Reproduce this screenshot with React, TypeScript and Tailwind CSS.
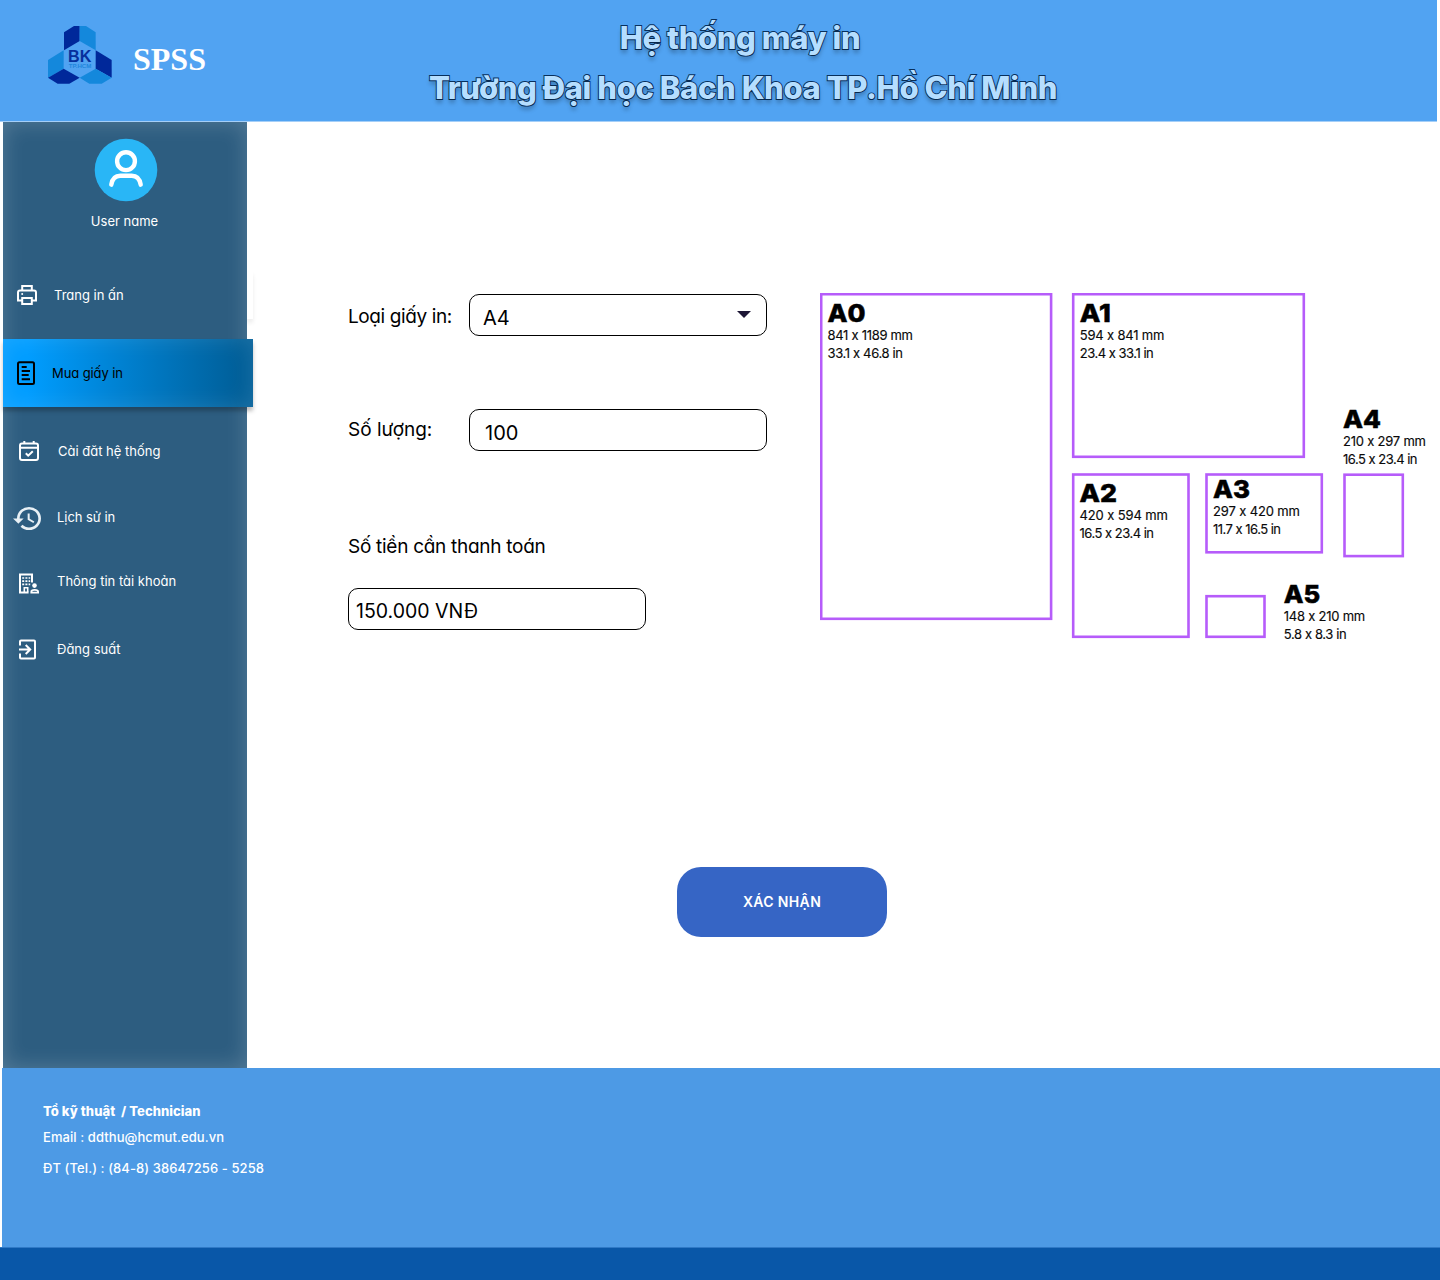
import type { ReactNode } from 'react';

const stroke = { fill: 'none', stroke: 'currentColor', strokeWidth: 2 } as const;

function Icon({ children }: { children: ReactNode }) {
  return (
    <svg className="h-7 w-7 shrink-0" viewBox="0 0 28 28">
      {children}
    </svg>
  );
}

const PrinterIcon = () => (
  <Icon>
    <g {...stroke}>
      <path d="M9.2 9.5V5h9.6v4.5" />
      <path d="M9.2 19.5H5v-8a2 2 0 0 1 2-2h14a2 2 0 0 1 2 2v8h-4.2" />
      <path d="M9.2 17h9.6v6H9.2z" />
    </g>
    <circle cx="9.2" cy="12.9" r="1" fill="currentColor" />
  </Icon>
);

const DocumentIcon = () => (
  <Icon>
    <g {...stroke}>
      <rect x="5" y="3.3" width="16" height="21.7" rx="1.5" />
      <path d="M8.7 8h5M8.7 12H17M8.7 16h7M8.7 20.2H17" />
    </g>
  </Icon>
);

const CalendarIcon = () => (
  <Icon>
    <g {...stroke}>
      <rect x="7" y="6.5" width="18" height="16.5" rx="2" />
      <path d="M7 10.7h18M11.3 4v3M20.7 4v3M12.8 16.2l2.4 2.4 4.6-4.4" />
    </g>
  </Icon>
);

const HistoryIcon = () => (
  <svg className="mt-px h-[23px] w-7 shrink-0 text-[#e8f0f5]" viewBox="1 3 21 18" preserveAspectRatio="none">
    <path
      fill="currentColor"
      d="M13 3a9 9 0 0 0-9 9H1l3.89 3.89.07.14L9 12H6c0-3.87 3.13-7 7-7s7 3.13 7 7-3.13 7-7 7c-1.93 0-3.68-.79-4.94-2.06l-1.42 1.42A8.954 8.954 0 0 0 13 21a9 9 0 0 0 0-18zm-1 5v5l4.28 2.54.72-1.21-3.5-2.08V8H12z"
    />
  </svg>
);

const AccountIcon = () => (
  <Icon>
    <g {...stroke}>
      <path d="M15.6 24.5H7v-18h12v8" />
      <path strokeWidth="1.6" d="M11.3 24v-4.2h3.4V24" />
      <path strokeDasharray="2 1.2" d="M9.2 10h8M9.2 13.2h8M9.2 16.4h8" strokeWidth="1.7" />
      <path strokeWidth="1.8" d="M18.3 24.6v-.8c0-1.3 1.1-1.9 3.4-1.9s3.4.6 3.4 1.9v.8z" />
    </g>
    <circle cx="21.5" cy="17.6" r="2.3" fill="currentColor" />
  </Icon>
);

const ExitIcon = () => (
  <Icon>
    <g {...stroke}>
      <path d="M7 9.5V5.500a1 1 0 0 1 1-1h13a1 1 0 0 1 1 1v16a1 1 0 0 1-1 1H8a1 1 0 0 1-1-1v-4" />
      <path d="M6 13.5h11M12.7 9l4.5 4.5-4.5 4.5" />
    </g>
  </Icon>
);

function Logo() {
  return (
    <svg className="h-[58px] w-16" viewBox="144 78 192 174">
      <path fill="#00289a" d="M192 97l30-19h17v45l-47 28z" />
      <path fill="#1488dc" d="M239 78h19l29 19v54l-48-28z" />
      <path fill="#1488dc" d="M144 180l47-29v55l-47 27z" />
      <path fill="#00289a" d="M144 233l47-27 48 27-31 18h-35z" />
      <path fill="#00289a" d="M287 151l48 29v53l-48-27z" />
      <path fill="#1488dc" d="M287 206l48 27-30 18h-37l-29-18z" />
      <text x="204" y="186" textLength="70" lengthAdjust="spacingAndGlyphs" fontSize="49" fontWeight="700" fontFamily="Liberation Sans, sans-serif" fill="#07309c">
        BK
      </text>
      <text x="206" y="205" textLength="68" lengthAdjust="spacingAndGlyphs" fontSize="18" fontWeight="700" fontFamily="Liberation Sans, sans-serif" fill="#1f86dc">
        TP.HCM
      </text>
    </svg>
  );
}

function Avatar() {
  return (
    <svg className="h-16 w-16" viewBox="94 138 64 64">
      <circle cx="126" cy="170" r="31.3" fill="#29b6f6" />
      <g fill="none" stroke="#fff" strokeWidth="4.4" strokeLinecap="round">
        <circle cx="126" cy="161.2" r="8.9" />
        <path d="M111.3 184.7c.9-5.6 4-9 9-9h11.4c5 0 8.1 3.4 9 9" />
      </g>
    </svg>
  );
}

type Item = { label: string; icon: ReactNode; row: string; text: string };

const items: Item[] = [
  { label: 'Cài đăt hệ thống', icon: <CalendarIcon />, row: 'mt-[11px] h-[66px]', text: 'ml-[17px] pt-0.5' },
  { label: 'Lịch sử in', icon: <HistoryIcon />, row: 'h-[67px]', text: 'ml-4 tracking-[-0.05px]' },
  { label: 'Thông tin tài khoản', icon: <AccountIcon />, row: 'h-[61px]', text: 'ml-4' },
  { label: 'Đăng suất', icon: <ExitIcon />, row: 'h-[75px]', text: 'ml-4' },
];

function Sidebar() {
  return (
    <aside className="ml-[3px] w-[244px] shrink-0 bg-[#2d5d80] text-[13px] text-white shadow-[inset_0_0_22px_rgba(255,255,255,0.2)] [font-feature-settings:'cv11']">
      <div className="flex flex-col items-center pt-4 pl-0.5">
        <Avatar />
        <p className="mt-[9px] mr-[3px] leading-5">User name</p>
      </div>
      <nav className="mt-10">
        <a className="relative flex h-12 items-center pl-2.5">
          <span className="absolute top-0 -right-1.5 h-12 w-1.5 bg-white shadow-[0_4px_4px_rgba(0,0,0,0.08)] [clip-path:inset(0_-8px_-8px_0)]" />
          <PrinterIcon />
          <span className="ml-[13px] pt-0.5">Trang in ấn</span>
        </a>
        <a className="relative mt-5 flex h-[68px] w-[250px] items-center bg-linear-to-r from-[#009dff] from-10% to-[#005f99] to-95% pl-2.5 text-black shadow-[0_4px_4px_rgba(0,0,0,0.25),inset_0_0_22px_rgba(255,255,255,0.12)]">
          <DocumentIcon />
          <span className="ml-[11px] pt-0.5 tracking-[-0.1px]">Mua giấy in</span>
        </a>
        {items.map((item) => (
          <a key={item.label} className={`flex items-center pl-2.5 ${item.row}`}>
            {item.icon}
            <span className={item.text}>{item.label}</span>
          </a>
        ))}
      </nav>
    </aside>
  );
}

const field = 'flex h-[42px] w-[298px] items-center rounded-[10px] border border-black bg-white';

function OrderForm() {
  return (
    <form className="mt-px w-[419px] text-[19px] text-black [font-feature-settings:'cv11']">
      <div className="flex items-center">
        <label className="w-[121px] pt-1 tracking-[-0.4px]">Loại giấy in:</label>
        <div className={`${field} justify-between pr-[15px] pl-[13px]`}>
          <span className="pt-1.5 text-[20px]">A4</span>
          <svg className="-mt-0.5 h-[7px] w-3.5" viewBox="0 0 14 7">
            <path d="M0 0h14L7 7z" fill="#1d1635" />
          </svg>
        </div>
      </div>
      <div className="mt-[73px] flex items-center">
        <label className="w-[121px]">Số lượng:</label>
        <div className={`${field} pl-[15px]`}>
          <span className="pt-1.5 text-[20px]">100</span>
        </div>
      </div>
      <label className="mt-[82px] block leading-7 tracking-[-0.28px]">Số tiền cần thanh toán</label>
      <div className={`${field} mt-[27px] pl-[7px]`}>
        <span className="pt-1.5 text-[19.5px]">150.000 VNĐ</span>
      </div>
    </form>
  );
}

type Sheet = {
  name: string;
  rect: [number, number, number, number];
  at: [number, number];
  mm: string;
  inch: string;
  widths: [number, number, number];
};

const sheets: Sheet[] = [
  { name: 'A0', rect: [820, 293, 1052.3, 620], at: [828, 321.7], mm: '841 x 1189 mm', inch: '33.1 x 46.8 in', widths: [37, 85, 75] },
  { name: 'A1', rect: [1072, 293, 1305, 458], at: [1080.3, 321.7], mm: '594 x 841 mm', inch: '23.4 x 33.1 in', widths: [30, 84, 73.5] },
  { name: 'A2', rect: [1072, 473.3, 1189.7, 638], at: [1080, 501.7], mm: '420 x 594 mm', inch: '16.5 x 23.4 in', widths: [36.5, 88, 74] },
  { name: 'A3', rect: [1205.3, 473.3, 1323, 553.5], at: [1213.5, 498], mm: '297 x 420 mm', inch: '11.7 x 16.5 in', widths: [36, 86.5, 67.5] },
  { name: 'A4', rect: [1343.3, 473.5, 1404, 557.3], at: [1343.5, 428], mm: '210 x 297 mm', inch: '16.5 x 23.4 in', widths: [37, 82.5, 74] },
  { name: 'A5', rect: [1205.3, 595, 1265.7, 638], at: [1284.2, 603], mm: '148 x 210 mm', inch: '5.8 x 8.3 in', widths: [35.5, 81, 62.5] },
];

function PaperSizes() {
  return (
    <svg
      className="h-[350px] w-[620px] shrink-0 [font-feature-settings:'calt'_0]"
      viewBox="820 293 620 350"
      fontFamily="Inter, sans-serif"
      fill="#0a0a0a"
    >
      {sheets.map(({ name, rect: [l, t, r, b], at: [x, y], mm, inch, widths }) => (
        <g key={name}>
          <rect x={l + 1.2} y={t + 1.2} width={r - l - 2.4} height={b - t - 2.4} fill="none" stroke="#b65cfa" strokeWidth="2.6" />
          <text x={x - 0.5} y={y} fontSize="25" fontWeight="800" fill="#000" stroke="#000" strokeWidth="0.5" textLength={widths[0] + 1} lengthAdjust="spacingAndGlyphs">
            {name}
          </text>
          <text x={x - 0.5} y={y + 17.8} fontSize="13" stroke="#0a0a0a" strokeWidth="0.15" textLength={widths[1] + 0.5}>
            {mm}
          </text>
          <text x={x - 0.5} y={y + 35.9} fontSize="13" stroke="#0a0a0a" strokeWidth="0.15" textLength={widths[2] + 0.5}>
            {inch}
          </text>
        </g>
      ))}
    </svg>
  );
}

export default function App() {
  return (
    <div className="flex h-[1280px] w-[1440px] flex-col overflow-hidden bg-white font-['Inter',sans-serif]">
      <header className="flex h-[122px] w-[1437px] border-b border-[#a5cff8] bg-[#51a3f2]">
        <div className="flex w-[260px] pt-[26px] pl-12">
          <Logo />
          <span className="mt-[9px] ml-[21px] font-['Liberation_Serif',serif] text-[32px] leading-[48px] font-bold text-white">SPSS</span>
        </div>
        <h1 className="w-[966px] pt-[13px] text-center text-[31px] leading-[50px] font-extrabold tracking-[-0.4px] text-[#b5deff] [paint-order:stroke_fill] [-webkit-text-stroke:1.8px_#08305c] [text-shadow:0_4px_4px_rgba(0,0,0,0.25)]">
          <span className="block pr-1.5">Hệ thống máy in</span>
          <span className="block">Trường Đại học Bách Khoa TP.Hồ Chí Minh</span>
        </h1>
      </header>

      <div className="flex h-[946px]">
        <Sidebar />
        <main className="w-[1193px] pt-[171px] pl-[101px]">
          <div className="flex gap-[53px]">
            <OrderForm />
            <PaperSizes />
          </div>
          <button className="mt-[224px] ml-[329px] block h-[70px] w-[210px] rounded-[24px] bg-[#3665c5] pb-0.5 text-[14px] font-semibold tracking-[0.35px] text-white">
            XÁC NHẬN
          </button>
        </main>
      </div>

      <footer className="ml-0.5 h-[179px] bg-[#4d9ae5] pt-[33px] pl-[41px] text-[13px] text-white">
        <p className="leading-5 font-extrabold tracking-[0.06px] whitespace-pre">Tổ kỹ thuật  / Technician</p>
        <p className="mt-1.5 leading-5 font-medium tracking-[0.08px]">Email : ddthu@hcmut.edu.vn</p>
        <p className="mt-[11px] leading-5 font-medium tracking-[0.09px]">ĐT (Tel.) : (84-8) 38647256 - 5258</p>
      </footer>
      <div className="h-[33px] border-t border-[#2f79c6] bg-[#0957a8]" />
    </div>
  );
}
